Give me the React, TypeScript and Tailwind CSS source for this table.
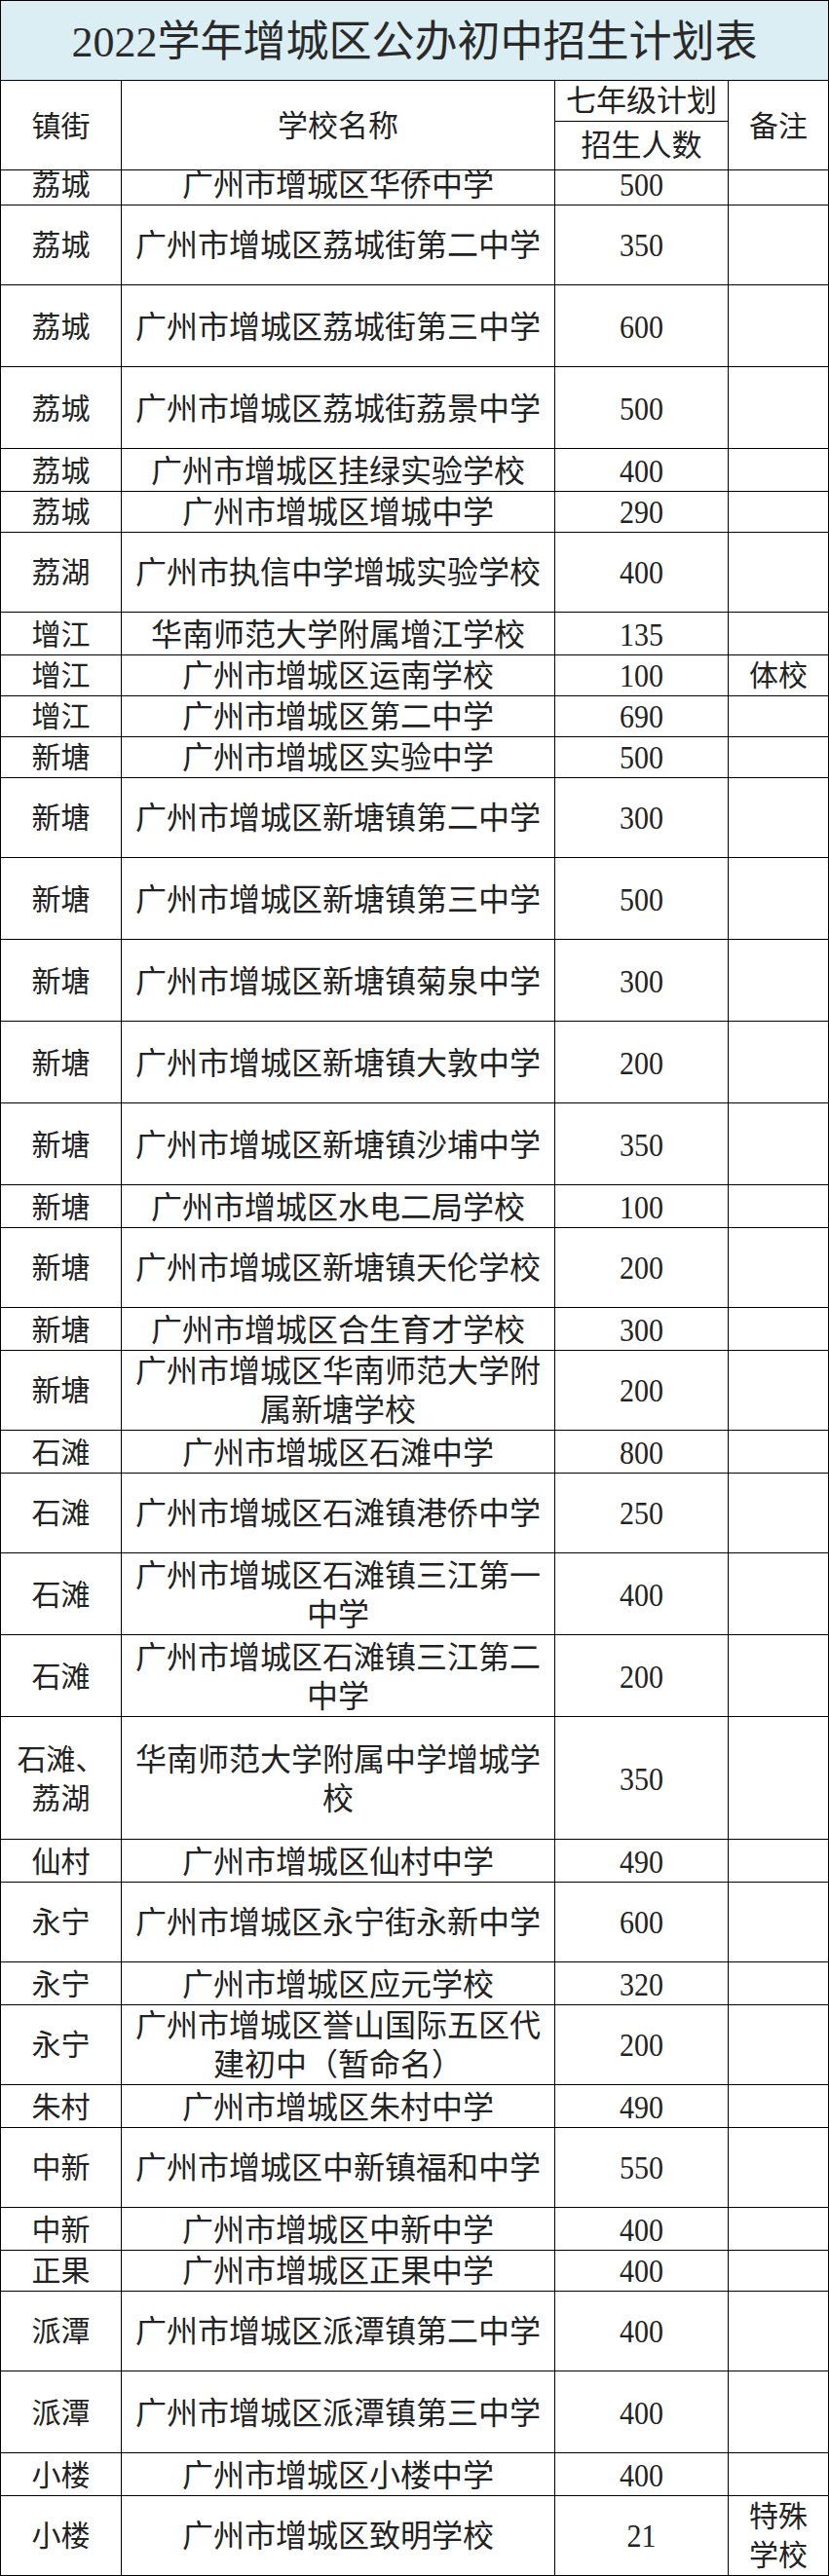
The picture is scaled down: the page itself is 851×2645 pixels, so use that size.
import React from "react";

// 镇街 | 学校名称 | 七年级计划招生人数 | 备注 | 行高（42px 为一格）
type Row = [string, string, string, string, 1 | 2 | 3];

const ROWS: Row[] = [
  ["荔城", "广州市增城区华侨中学", "500", "", 1],
  ["荔城", "广州市增城区荔城街第二中学", "350", "", 2],
  ["荔城", "广州市增城区荔城街第三中学", "600", "", 2],
  ["荔城", "广州市增城区荔城街荔景中学", "500", "", 2],
  ["荔城", "广州市增城区挂绿实验学校", "400", "", 1],
  ["荔城", "广州市增城区增城中学", "290", "", 1],
  ["荔湖", "广州市执信中学增城实验学校", "400", "", 2],
  ["增江", "华南师范大学附属增江学校", "135", "", 1],
  ["增江", "广州市增城区运南学校", "100", "体校", 1],
  ["增江", "广州市增城区第二中学", "690", "", 1],
  ["新塘", "广州市增城区实验中学", "500", "", 1],
  ["新塘", "广州市增城区新塘镇第二中学", "300", "", 2],
  ["新塘", "广州市增城区新塘镇第三中学", "500", "", 2],
  ["新塘", "广州市增城区新塘镇菊泉中学", "300", "", 2],
  ["新塘", "广州市增城区新塘镇大敦中学", "200", "", 2],
  ["新塘", "广州市增城区新塘镇沙埔中学", "350", "", 2],
  ["新塘", "广州市增城区水电二局学校", "100", "", 1],
  ["新塘", "广州市增城区新塘镇天伦学校", "200", "", 2],
  ["新塘", "广州市增城区合生育才学校", "300", "", 1],
  ["新塘", "广州市增城区华南师范大学附\n属新塘学校", "200", "", 2],
  ["石滩", "广州市增城区石滩中学", "800", "", 1],
  ["石滩", "广州市增城区石滩镇港侨中学", "250", "", 2],
  ["石滩", "广州市增城区石滩镇三江第一\n中学", "400", "", 2],
  ["石滩", "广州市增城区石滩镇三江第二\n中学", "200", "", 2],
  ["石滩、\n荔湖", "华南师范大学附属中学增城学\n校", "350", "", 3],
  ["仙村", "广州市增城区仙村中学", "490", "", 1],
  ["永宁", "广州市增城区永宁街永新中学", "600", "", 2],
  ["永宁", "广州市增城区应元学校", "320", "", 1],
  ["永宁", "广州市增城区誉山国际五区代\n建初中（暂命名）", "200", "", 2],
  ["朱村", "广州市增城区朱村中学", "490", "", 1],
  ["中新", "广州市增城区中新镇福和中学", "550", "", 2],
  ["中新", "广州市增城区中新中学", "400", "", 1],
  ["正果", "广州市增城区正果中学", "400", "", 1],
  ["派潭", "广州市增城区派潭镇第二中学", "400", "", 2],
  ["派潭", "广州市增城区派潭镇第三中学", "400", "", 2],
  ["小楼", "广州市增城区小楼中学", "400", "", 1],
  ["小楼", "广州市增城区致明学校", "21", "特殊\n学校", 2],
];

const HEIGHT = { 1: "h-[42px]", 2: "h-[84px]", 3: "h-[126px]" } as const;

const COLS = "grid grid-cols-[124px_445px_178px_103px]";
const CELL =
  "flex items-center justify-center text-center border-r border-b border-black whitespace-pre-line leading-[40px] pt-[3px]";

export default function App() {
  return (
    <div className="w-[851px] bg-white text-[#222] font-['Liberation_Serif','Noto_Sans_CJK_SC',serif]">
      <div className="border-l border-black">
        {/* 标题 */}
        <div className="h-[83px] border-t border-r border-b border-black bg-[#dbeef4] flex items-center justify-center pt-[5px]">
          <h1 className="text-[44px] leading-none font-normal text-[#2a2a2a]">
            2022学年增城区公办初中招生计划表
          </h1>
        </div>

        {/* 表头 */}
        <div className={`${COLS} h-[84px]`}>
          <div className={`${CELL} text-[30px]`}>镇街</div>
          <div className={`${CELL} text-[31px]`}>学校名称</div>
          <div className="flex flex-col border-r border-b border-black">
            <div className="h-[42px] flex items-center justify-center border-b border-black text-[31px] pt-[2px]">
              七年级计划
            </div>
            <div className="flex-1 flex items-center justify-center text-[31px] pt-[2px]">
              招生人数
            </div>
          </div>
          <div className={`${CELL} text-[30px]`}>备注</div>
        </div>

        {/* 数据行 */}
        {ROWS.map(([town, school, count, note, h], i) => (
          <div key={i} className={`${COLS} ${HEIGHT[h]}`}>
            <div className={`${CELL} text-[30px]`}>{town}</div>
            <div className={`${CELL} text-[32px] px-0`}>{school}</div>
            <div className={`${CELL} text-[30px]`}>
              <span className="inline-block scale-y-[1.12]">{count}</span>
            </div>
            <div className={`${CELL} text-[30px]`}>{note}</div>
          </div>
        ))}
      </div>
    </div>
  );
}
